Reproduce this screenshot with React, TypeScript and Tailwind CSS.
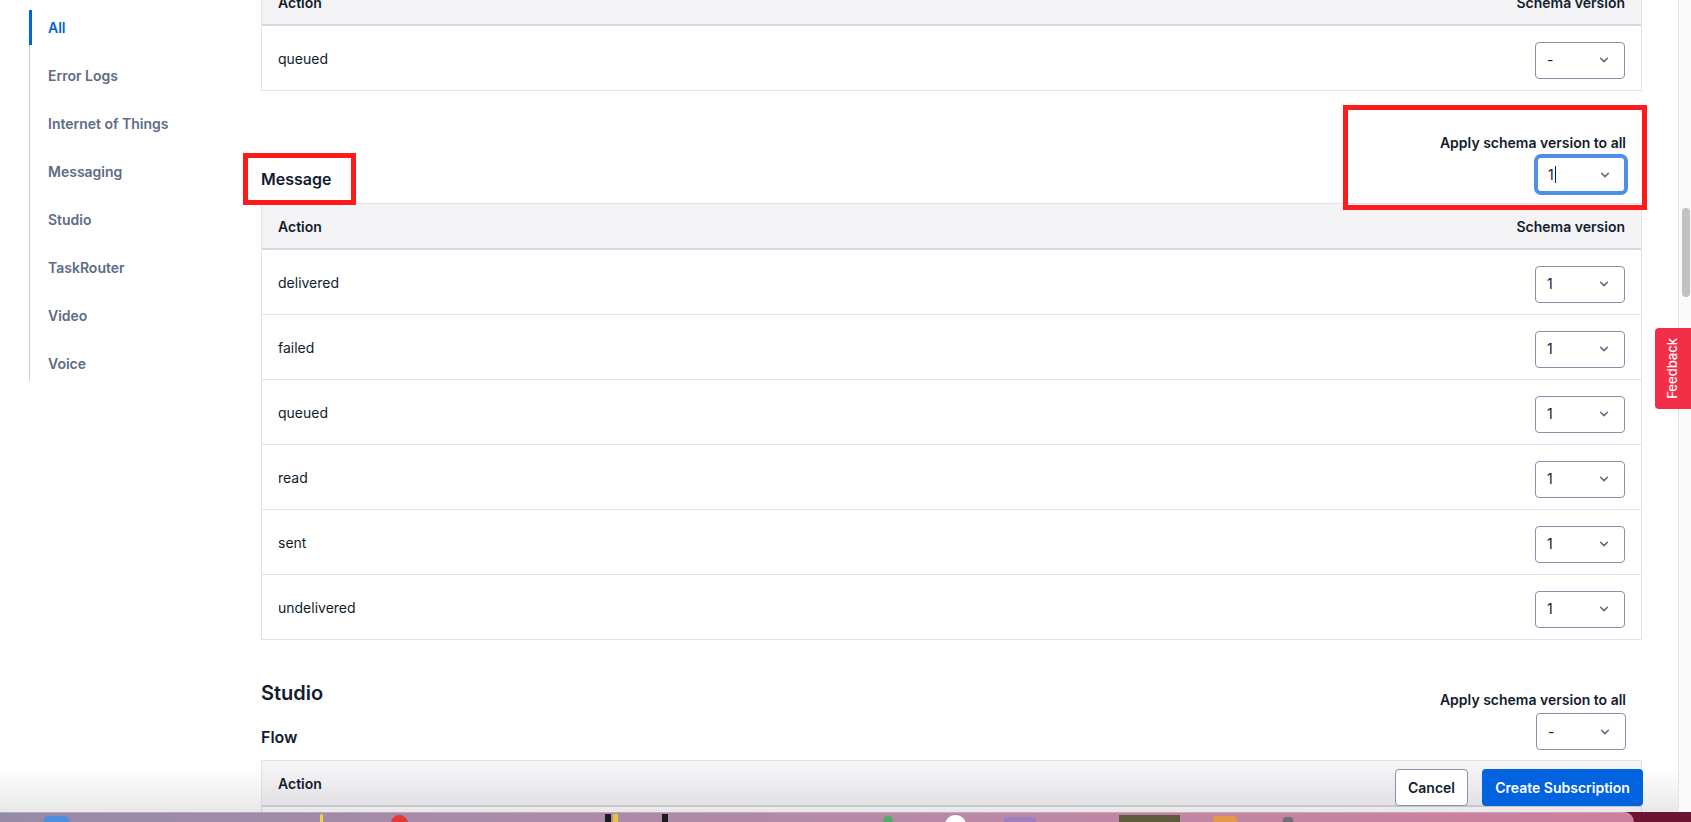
import React from "react";

const Chevron = () => (
  <svg width="10" height="6" viewBox="0 0 10 6" fill="none">
    <path d="M1.6 1.3L5 4.6L8.4 1.3" stroke="#606b85" strokeWidth="1.6" strokeLinecap="round" strokeLinejoin="round" />
  </svg>
);

function Select({ value, focused = false }: { value: string; focused?: boolean }) {
  return (
    <div
      className={
        focused
          ? "flex h-[37px] w-[90px] items-center justify-between rounded-[5px] border-2 border-[#4f8fe6] bg-white pl-[10px] pr-[14px] text-[14px] text-[#121c2d] shadow-[0_0_0_2px_#4f8fe6]"
          : "flex h-[37px] w-[90px] items-center justify-between rounded-[4px] border border-[#8891aa] bg-white pl-[11px] pr-[15px] text-[14px] text-[#121c2d]"
      }
    >
      <span className="flex items-center leading-[20px]">
        {value}
        {focused && <span className="ml-[1px] inline-block h-[17px] w-px bg-[#121c2d]" />}
      </span>
      <Chevron />
    </div>
  );
}

function Table({ rows, value }: { rows: string[]; value: string }) {
  return (
    <div className="border border-[#e1e3ea]">
      <div className="flex h-[46px] items-center justify-between border-b-2 border-[#d6d8df] bg-[#f4f4f6] px-[16px] text-[14px] font-semibold text-[#121c2d]">
        <span>Action</span>
        <span>Schema version</span>
      </div>
      {rows.map((r, i) => (
        <div
          key={r + i}
          className={
            i === rows.length - 1
              ? "flex h-[64px] items-center justify-between px-[16px] text-[14px] text-[#121c2d]"
              : "flex h-[65px] items-center justify-between border-b border-[#e1e3ea] px-[16px] text-[14px] text-[#121c2d]"
          }
        >
          <span>{r}</span>
          <div className="mt-[4px]">
            <Select value={value} />
          </div>
        </div>
      ))}
    </div>
  );
}

function ApplyAll({ value, focused = false, annotated = false }: { value: string; focused?: boolean; annotated?: boolean }) {
  return (
    <div className="relative flex flex-col items-end gap-[3px]">
      <span className="text-[14px] font-semibold leading-[20px] text-[#121c2d]">Apply schema version to all</span>
      <Select value={value} focused={focused} />
      {annotated && (
        <div className="pointer-events-none absolute right-[-21px] top-[-28px] h-[105px] w-[304px] border-[5px] border-[#fe1b1b]" />
      )}
    </div>
  );
}

const navItems = ["All", "Error Logs", "Internet of Things", "Messaging", "Studio", "TaskRouter", "Video", "Voice"];

export default function App() {
  return (
    <div className="flex h-[822px] w-full flex-col overflow-hidden bg-white font-['Inter','Noto_Sans',sans-serif] text-[#121c2d]">
      <div className="relative flex h-[812px] overflow-hidden">
        {/* Sidebar */}
        <aside className="w-[261px] shrink-0 pt-[10px]">
          <nav className="ml-[29px] flex flex-col gap-[13px] border-l border-[#cacdd8]">
            {navItems.map((n, i) => (
              <div
                key={n}
                className={
                  i === 0
                    ? "-ml-px flex h-[35px] items-center border-l-[3px] border-[#0263e0] pl-[16px] text-[14px] font-semibold text-[#0263e0]"
                    : "flex h-[35px] items-center pl-[18px] text-[14px] font-semibold text-[#606b85]"
                }
              >
                {n}
              </div>
            ))}
          </nav>
        </aside>

        {/* Main content */}
        <main className="min-w-0 flex-1 pr-[36px]">
          <div className="-mt-[21px]">
            <Table rows={["queued"]} value="-" />

            <div className="mb-[10px] mt-[42px] flex items-end justify-between pr-[16px]">
              <h3 className="relative mb-[2px] inline-block text-[16px] font-semibold leading-[24px]">
                Message
                <span className="pointer-events-none absolute left-[-18px] top-[-14px] h-[52px] w-[113px] border-[5px] border-[#fe1b1b]" />
              </h3>
              <ApplyAll value="1" focused annotated />
            </div>
            <Table rows={["delivered", "failed", "queued", "read", "sent", "undelivered"]} value="1" />

            <div className="mb-[10px] mt-[39px] flex items-end justify-between pr-[16px]">
              <div>
                <h2 className="text-[20px] font-semibold leading-[28px]">Studio</h2>
                <h3 className="mb-[1px] mt-[18px] text-[16px] font-semibold leading-[24px]">Flow</h3>
              </div>
              <ApplyAll value="-" />
            </div>
            <Table rows={["created", "ended"]} value="-" />
          </div>
        </main>

        {/* Scrollbar */}
        <div className="w-[13px] shrink-0 border-l border-[#e6e6e6] bg-[#fafafa]">
          <div className="ml-[3px] mt-[208px] h-[89px] w-[8px] rounded-full bg-[#c1c1c1]" />
        </div>

        {/* bottom shade */}
        <div className="pointer-events-none absolute bottom-0 left-0 right-[13px] h-[44px] bg-linear-to-b from-transparent to-black/[0.09]" />

        {/* Footer actions */}
        <div className="absolute bottom-[6px] right-[48px] flex gap-[14px]">
          <button className="h-[37px] w-[73px] rounded-[4px] border border-[#8891aa] bg-white text-[14px] font-semibold text-[#121c2d]">
            Cancel
          </button>
          <button className="h-[37px] w-[161px] rounded-[4px] bg-[#0263e0] text-[14px] font-semibold text-white">
            Create Subscription
          </button>
        </div>

        {/* Feedback tab */}
        <div className="absolute right-0 top-[328px] flex h-[81px] w-[36px] items-center justify-center rounded-l-[4px] bg-[#f22f46]">
          <span className="rotate-180 text-[13px] font-medium text-white [writing-mode:vertical-rl]">Feedback</span>
        </div>
      </div>

      {/* Dock strip */}
      <div className="flex h-[10px] bg-[#6d1433]">
        <div className="flex h-full w-[1634px] items-start overflow-hidden rounded-tr-[10px] border-t border-white/25 bg-linear-to-r from-[#968ba7] via-[#b48aa8] to-[#cd7f9b]">
          <div className="ml-[43px] mt-[3px] h-[8px] w-[27px] rounded-t-[6px] bg-[#4b8fe0]" />
          <div className="ml-[250px] mt-[1px] h-[8px] w-[3px] rounded-t-[2px] bg-[#f2d24b]" />
          <div className="ml-[68px] mt-[2px] h-[10px] w-[17px] rounded-t-full bg-[#e53935]" />
          <div className="ml-[197px] mt-[1px] h-[8px] w-[6px] bg-[#1b1b1b]" />
          <div className="ml-[2px] mt-[1px] h-[8px] w-[5px] bg-[#e8c33a]" />
          <div className="ml-[44px] mt-[1px] h-[8px] w-[6px] bg-[#1b1b1b]" />
          <div className="ml-[215px] mt-[3px] h-[8px] w-[10px] rounded-t-full bg-[#4caf6a]" />
          <div className="ml-[52px] mt-[2px] h-[10px] w-[21px] rounded-t-full bg-white" />
          <div className="ml-[38px] mt-[4px] h-[8px] w-[32px] rounded-t-[4px] bg-[#9b7fc0]" />
          <div className="ml-[83px] mt-[2px] h-[8px] w-[61px] bg-[#5e5a3c]" />
          <div className="ml-[33px] mt-[3px] h-[8px] w-[24px] rounded-t-[4px] bg-[#e3984a]" />
          <div className="ml-[46px] mt-[4px] h-[8px] w-[10px] rounded-t-[3px] bg-[#6f6f7a]" />
        </div>
      </div>
    </div>
  );
}
